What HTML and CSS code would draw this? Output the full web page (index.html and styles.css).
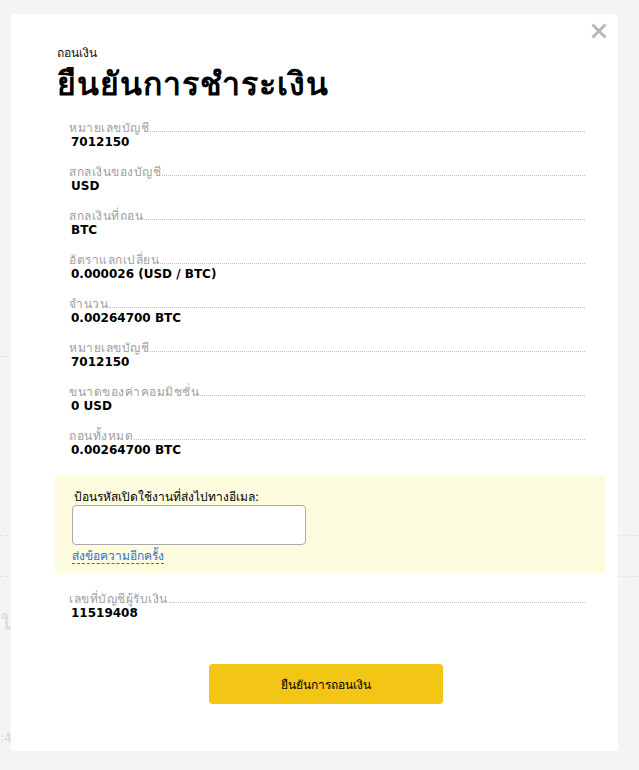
FILE: index.html
```html
<!DOCTYPE html>
<html lang="th">
<head>
<meta charset="utf-8">
<title>ยืนยันการชำระเงิน</title>
<link rel="stylesheet" href="styles.css">
</head>
<body>
<div class="page-bg">
  <div class="bg-line bg-line-1"></div>
  <div class="bg-line bg-line-2"></div>
  <div class="bg-line bg-line-3"></div>
  <div class="bg-big">น</div>
  <div class="bg-small">:45</div>
</div>

<div class="modal">
  <button class="close" aria-label="close">
    <svg width="16" height="16" viewBox="0 0 16 16"><path d="M1.5 1.5 L14.5 14.5 M14.5 1.5 L1.5 14.5" stroke="#b8b8b8" stroke-width="3" fill="none"/></svg>
  </button>
  <div class="subtitle">ถอนเงิน</div>
  <h1 class="title">ยืนยันการชำระเงิน</h1>

  <div class="rows">
    <div class="row"><div class="label"><span>หมายเลขบัญชี</span><i></i></div><div class="value">7012150</div></div>
    <div class="row"><div class="label"><span>สกลเงินของบัญชี</span><i></i></div><div class="value">USD</div></div>
    <div class="row"><div class="label"><span>สกลเงินที่ถอน</span><i></i></div><div class="value">BTC</div></div>
    <div class="row"><div class="label"><span>อัตราแลกเปลี่ยน</span><i></i></div><div class="value">0.000026 (USD / BTC)</div></div>
    <div class="row"><div class="label"><span>จำนวน</span><i></i></div><div class="value">0.00264700 BTC</div></div>
    <div class="row"><div class="label"><span>หมายเลขบัญชี</span><i></i></div><div class="value">7012150</div></div>
    <div class="row"><div class="label"><span>ขนาดของค่าคอมมิชชั่น</span><i></i></div><div class="value">0 USD</div></div>
    <div class="row"><div class="label"><span>ถอนทั้งหมด</span><i></i></div><div class="value">0.00264700 BTC</div></div>
  </div>

  <div class="code-box">
    <div class="code-label">ป้อนรหัสเปิดใช้งานที่ส่งไปทางอีเมล:</div>
    <input class="code-input" type="text">
    <div><a class="resend" href="#">ส่งข้อความอีกครั้ง</a></div>
  </div>

  <div class="rows rows-after">
    <div class="row"><div class="label"><span>เลขที่บัญชีผู้รับเงิน</span><i></i></div><div class="value">11519408</div></div>
  </div>

  <div class="actions">
    <button class="confirm">ยืนยันการถอนเงิน</button>
  </div>
</div>
</body>
</html>
```
FILE: styles.css
```css
html, body {
  margin: 0;
  padding: 0;
  background: #f4f4f4;
  font-family: "DejaVu Sans", "Noto Sans", sans-serif;
  height: 770px;
  overflow: hidden;
}

.page-bg {
  position: relative;
  height: 770px;
}
.bg-line {
  position: absolute;
  left: 0;
  right: 0;
  border-top: 1px dashed #e4e4e4;
}
.bg-line-1 { top: 356px; right: 600px; }
.bg-line-2 { top: 535px; }
.bg-line-3 { top: 576px; }
.bg-big {
  position: absolute;
  left: 0;
  top: 602px;
  font-size: 30px;
  line-height: 36px;
  color: #dcdcdc;
}
.bg-small {
  position: absolute;
  left: 0;
  top: 730px;
  font-size: 12px;
  line-height: 16px;
  color: #d4d4d4;
}

.modal {
  position: absolute;
  left: 11px;
  top: 14px;
  width: 607px;
  height: 737px;
  box-sizing: border-box;
  background: #fff;
  border-radius: 3px;
  padding: 30px 13px 0 44px;
}

.close {
  position: absolute;
  top: 9px;
  right: 11px;
  width: 16px;
  height: 16px;
  padding: 0;
  border: 0;
  background: none;
  cursor: pointer;
  display: flex;
}

.subtitle {
  font-size: 12px;
  line-height: 18px;
  color: #111;
  padding-left: 2px;
}

.title {
  margin: 2px 0 0 0;
  font-size: 32px;
  line-height: 40px;
  font-weight: bold;
  letter-spacing: 1px;
  color: #000;
  padding-left: 2px;
}

.rows {
  margin: 17px 20px 0 14px;
}
.row {
  margin-bottom: 16px;
}
.label {
  display: flex;
  align-items: flex-end;
  font-size: 12px;
  line-height: 14px;
  color: #9e9e9e;
  letter-spacing: 0.5px;
}
.label i {
  flex: 1;
  border-bottom: 1px dotted #bdbdbd;
  margin-bottom: 3px;
  margin-left: 1px;
}
.value {
  font-size: 12px;
  line-height: 14px;
  font-weight: bold;
  color: #000;
  padding-left: 2px;
}

.code-box {
  margin-top: 18px;
  background: #fdfcdf;
  height: 98px;
  box-sizing: border-box;
  padding: 14px 17px 0 17px;
}
.code-label {
  font-size: 12px;
  line-height: 16px;
  color: #000;
  padding-left: 2px;
}
.code-input {
  display: block;
  width: 234px;
  height: 40px;
  box-sizing: border-box;
  border: 1px solid #ababab;
  border-radius: 4px;
  background: #fff;
  margin: 0;
  padding: 0 6px;
}
.resend {
  font-size: 12px;
  line-height: 16px;
  color: #2e6fd6;
  text-decoration: none;
  border-bottom: 1px dashed #2e6fd6;
}

.rows-after {
  margin-top: 19px;
}

.actions {
  display: flex;
  justify-content: center;
  margin-top: 44px;
  padding-right: 8px;
}
.confirm {
  width: 234px;
  height: 40px;
  border: 0;
  border-radius: 4px;
  background: #f3c514;
  color: #000;
  font-family: "DejaVu Sans", "Noto Sans", sans-serif;
  font-size: 12px;
  cursor: pointer;
}
```
